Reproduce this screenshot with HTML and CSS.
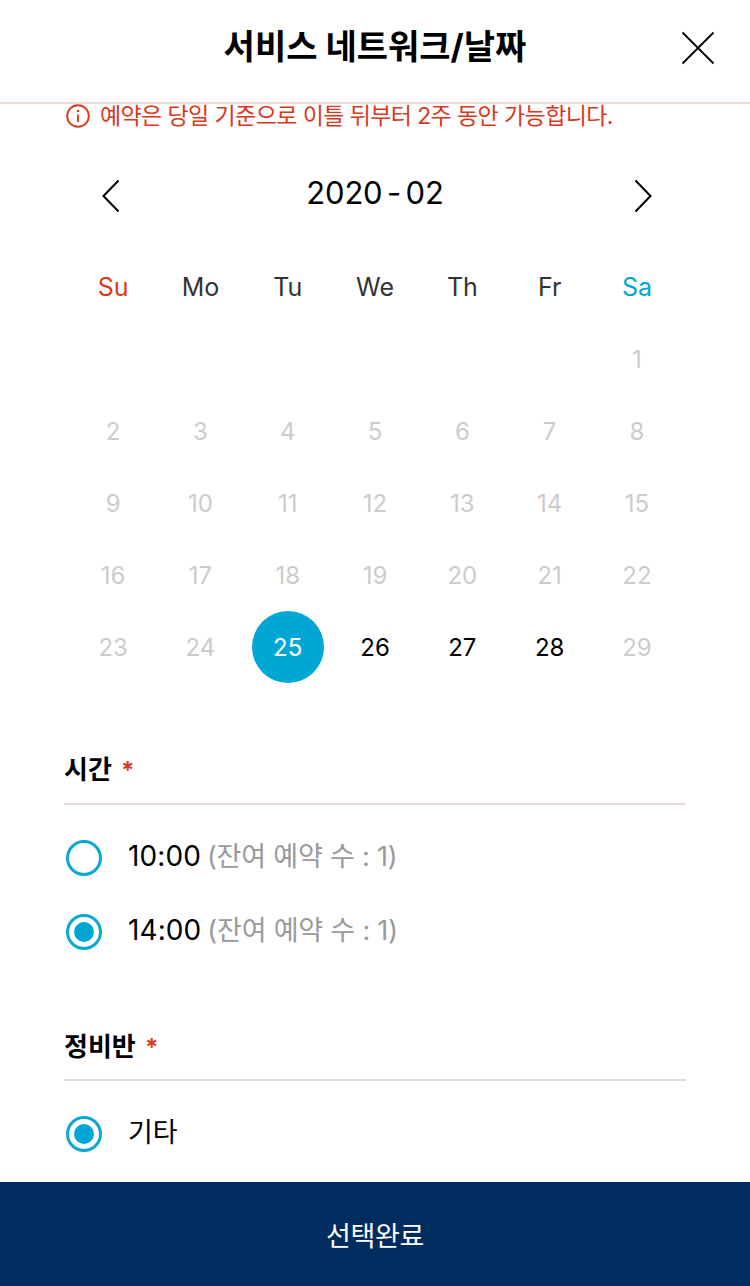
FILE: index.html
```html
<!DOCTYPE html>
<html lang="ko">
<head>
<meta charset="utf-8">
<title>서비스 네트워크/날짜</title>
<link rel="stylesheet" href="styles.css">
</head>
<body>
<div class="page">
  <header class="top">
    <h1 class="title">서비스 네트워크/날짜</h1>
    <button class="close" aria-label="닫기">
      <svg width="34" height="34" viewBox="0 0 34 34"><path d="M1.5 1.5 32.5 32.5M32.5 1.5 1.5 32.5" fill="none" stroke="#000" stroke-width="1.8"/></svg>
    </button>
  </header>
  <main class="content">
    <p class="notice">
      <svg class="notice-icon" width="24" height="24" viewBox="0 0 24 24"><circle cx="12" cy="12" r="10.8" fill="none" stroke="#d8391b" stroke-width="1.9"/><path d="M12 10.5V18" stroke="#d8391b" stroke-width="1.9"/><circle cx="12" cy="7" r="1.3" fill="#d8391b"/></svg>
      <span>예약은 당일 기준으로 이틀 뒤부터 2주 동안 가능합니다.</span>
    </p>
    <div class="month">
      <svg width="20" height="34" viewBox="0 0 20 34"><path d="M17.5 1.5 2.5 17 17.5 32.5" fill="none" stroke="#000" stroke-width="2"/></svg>
      <span class="month-label">2020 - 02</span>
      <svg width="20" height="34" viewBox="0 0 20 34"><path d="M2.5 1.5 17.5 17 2.5 32.5" fill="none" stroke="#000" stroke-width="2"/></svg>
    </div>
    <div class="weekdays">
      <span class="sun">Su</span><span>Mo</span><span>Tu</span><span>We</span><span>Th</span><span>Fr</span><span class="sat">Sa</span>
    </div>
    <div class="days">
      <span></span><span></span><span></span><span></span><span></span><span></span><span>1</span>
      <span>2</span><span>3</span><span>4</span><span>5</span><span>6</span><span>7</span><span>8</span>
      <span>9</span><span>10</span><span>11</span><span>12</span><span>13</span><span>14</span><span>15</span>
      <span>16</span><span>17</span><span>18</span><span>19</span><span>20</span><span>21</span><span>22</span>
      <span>23</span><span>24</span><span class="selected"><b>25</b></span><span class="on">26</span><span class="on">27</span><span class="on">28</span><span>29</span>
    </div>
    <section class="group group-time">
      <h2 class="group-title">시간 <em>*</em></h2>
      <div class="options">
        <div class="option"><i class="radio"></i><span class="option-text">10:00 <small>(잔여 예약 수 : 1)</small></span></div>
        <div class="option"><i class="radio checked"></i><span class="option-text">14:00 <small>(잔여 예약 수 : 1)</small></span></div>
      </div>
    </section>
    <section class="group group-team">
      <h2 class="group-title">정비반 <em>*</em></h2>
      <div class="options">
        <div class="option"><i class="radio checked"></i><span class="option-text plain">기타</span></div>
      </div>
    </section>
  </main>
  <button class="submit">선택완료</button>
</div>
</body>
</html>
```

FILE: styles.css
```css
* { box-sizing: border-box; }
html, body { margin: 0; padding: 0; background: #fff; }
body { font-family: Inter, "Noto Sans CJK KR", sans-serif; color: #000; }
.page { width: 750px; height: 1286px; display: flex; flex-direction: column; overflow: hidden; }
.top { height: 104px; flex: none; border-bottom: 2px solid #e8dcd6; display: flex; align-items: center; justify-content: center; padding-bottom: 8px; position: relative; }
.title { margin: 0; font-size: 34px; font-weight: 700; letter-spacing: 0; line-height: 46px; }
.close { position: absolute; left: 681px; top: 31px; width: 34px; height: 34px; padding: 0; border: 0; background: none; }
.close svg, .month svg { display: block; }
.content { flex: 1; min-height: 0; padding: 0 64px; }
.notice { margin: 0; height: 24px; padding-left: 2px; display: flex; align-items: center; gap: 10px; color: #d8391b; font-size: 23px; line-height: 24px; letter-spacing: -0.6px; }
.notice-icon { flex: none; }
.month { margin: 48px 0 0; padding: 0 33px 0 37px; height: 40px; display: flex; align-items: center; justify-content: space-between; }
.month-label { font-size: 31px; line-height: 40px; letter-spacing: -0.2px; word-spacing: -4px; position: relative; top: -3px; left: -2px; }
.weekdays, .days { display: grid; grid-template-columns: repeat(7, 87.3px); margin-left: 5.5px; }
.weekdays { margin-top: 55px; height: 32px; color: #333; font-size: 25px; line-height: 32px; text-align: center; }
.sun { color: #d8391b; }
.sat { color: #00a7d4; }
.days { grid-auto-rows: 72px; margin-top: 20px; color: #ccc; font-size: 24px; }
.days span { display: flex; align-items: center; justify-content: center; }
.days .on { color: #000; }
.selected b { width: 72px; height: 72px; border-radius: 50%; background: #00a7d4; color: #fff; font-weight: 400; display: flex; align-items: center; justify-content: center; }
.group-title { margin: 0; height: 52px; border-bottom: 2px solid #e8dcd6; font-size: 26px; line-height: 34px; font-weight: 700; }
.group-title em { font-style: normal; color: #d8391b; font-size: 24px; margin-left: 3px; }
.group-time { margin-top: 70px; }
.group-team { margin-top: 80px; }
.group-team .group-title { height: 51px; border-bottom-color: #ddd; }
.options { display: flex; flex-direction: column; gap: 38px; padding: 35px 0 0 2px; }
.option { height: 36px; display: flex; align-items: center; gap: 26px; font-size: 28px; }
.option-text { position: relative; top: -4px; letter-spacing: 0.1px; }
.option-text.plain { font-size: 27px; letter-spacing: -0.2px; }
.option small { font-size: 27px; color: #999; letter-spacing: -0.2px; margin-left: -2px; }
.radio { flex: none; width: 36px; height: 36px; border: 3px solid #0ba9d2; border-radius: 50%; display: flex; align-items: center; justify-content: center; }
.radio.checked::after { content: ""; width: 20px; height: 20px; border-radius: 50%; background: #00a7d4; }
.submit { flex: none; width: 100%; height: 104px; border: 0; padding: 0; background: #002c5f; color: #fff; font: 400 27px "Noto Sans CJK KR", sans-serif; letter-spacing: -0.4px; }
```
